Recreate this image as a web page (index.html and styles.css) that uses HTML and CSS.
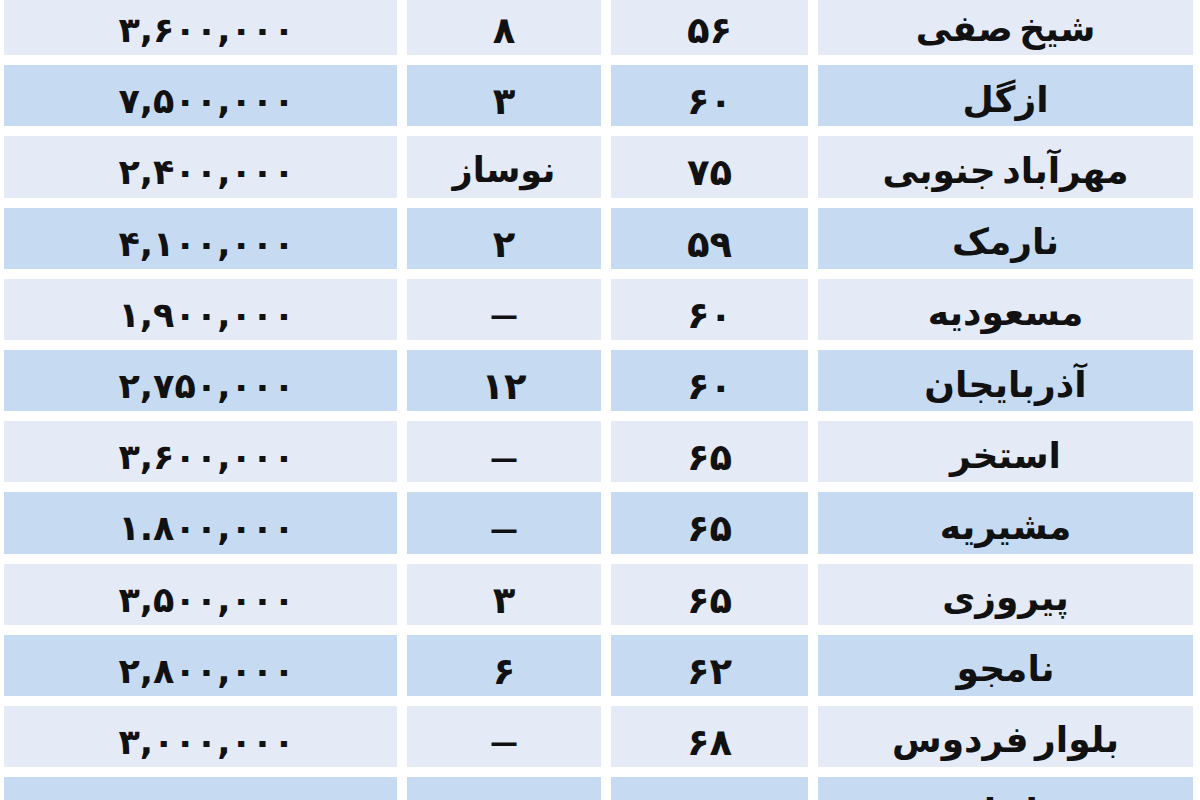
FILE: index.html
```html
<!DOCTYPE html>
<html lang="fa" dir="rtl">
<head>
<meta charset="utf-8">
<link rel="stylesheet" href="styles.css">
</head>
<body>
<div class="table">
  <div class="row light"><div class="cell name">شیخ صفی</div><div class="cell">۵۶</div><div class="cell">۸</div><div class="cell price">۳,۶۰۰,۰۰۰</div></div>
  <div class="row blue"><div class="cell name">ازگل</div><div class="cell">۶۰</div><div class="cell">۳</div><div class="cell price">۷,۵۰۰,۰۰۰</div></div>
  <div class="row light"><div class="cell name">مهرآباد جنوبی</div><div class="cell">۷۵</div><div class="cell word">نوساز</div><div class="cell price">۲,۴۰۰,۰۰۰</div></div>
  <div class="row blue"><div class="cell name">نارمک</div><div class="cell">۵۹</div><div class="cell">۲</div><div class="cell price">۴,۱۰۰,۰۰۰</div></div>
  <div class="row light"><div class="cell name">مسعودیه</div><div class="cell">۶۰</div><div class="cell dash">—</div><div class="cell price">۱,۹۰۰,۰۰۰</div></div>
  <div class="row blue"><div class="cell name">آذربایجان</div><div class="cell">۶۰</div><div class="cell">۱۲</div><div class="cell price">۲,۷۵۰,۰۰۰</div></div>
  <div class="row light"><div class="cell name">استخر</div><div class="cell">۶۵</div><div class="cell dash">—</div><div class="cell price">۳,۶۰۰,۰۰۰</div></div>
  <div class="row blue"><div class="cell name">مشیریه</div><div class="cell">۶۵</div><div class="cell dash">—</div><div class="cell price">۱.۸۰۰,۰۰۰</div></div>
  <div class="row light"><div class="cell name">پیروزی</div><div class="cell">۶۵</div><div class="cell">۳</div><div class="cell price">۳,۵۰۰,۰۰۰</div></div>
  <div class="row blue"><div class="cell name">نامجو</div><div class="cell">۶۲</div><div class="cell">۶</div><div class="cell price">۲,۸۰۰,۰۰۰</div></div>
  <div class="row light"><div class="cell name">بلوار فردوس</div><div class="cell">۶۸</div><div class="cell dash">—</div><div class="cell price">۳,۰۰۰,۰۰۰</div></div>
  <div class="row blue"><div class="cell name">تهرانپارس</div><div class="cell">۷۳</div><div class="cell">۱۰</div><div class="cell price">۳,۲۰۰,۰۰۰</div></div>
</div>
</body>
</html>
```
FILE: styles.css
```css
html, body {
  margin: 0;
  padding: 0;
  background: #ffffff;
  overflow: hidden;
}
body {
  width: 1200px;
  height: 800px;
  font-family: "DejaVu Sans", "Noto Sans", sans-serif;
}
.table {
  direction: rtl;
  display: flex;
  flex-direction: column;
  gap: 10px;
  margin-top: -6px;
  padding-right: 7px;
  padding-left: 4px;
}
.row {
  display: grid;
  grid-template-columns: 375px 197px 194px 393px;
  column-gap: 10px;
  height: 61.2px;
}
.cell {
  display: flex;
  align-items: center;
  justify-content: center;
  padding-top: 12px;
  font-weight: bold;
  font-size: 37px;
  color: #111111;
  line-height: 1;
}
.name {
  font-size: 36px;
  padding-top: 8px;
  word-spacing: -6px;
}
.word {
  font-size: 35px;
  padding-top: 8px;
}
.dash {
  font-size: 28px;
  padding-top: 14px;
}
.light .cell {
  background: #e4eaf6;
}
.blue .cell {
  background: #c6dbf1;
}
.price {
  direction: ltr;
  font-size: 35px;
  padding-left: 12px;
}
```
